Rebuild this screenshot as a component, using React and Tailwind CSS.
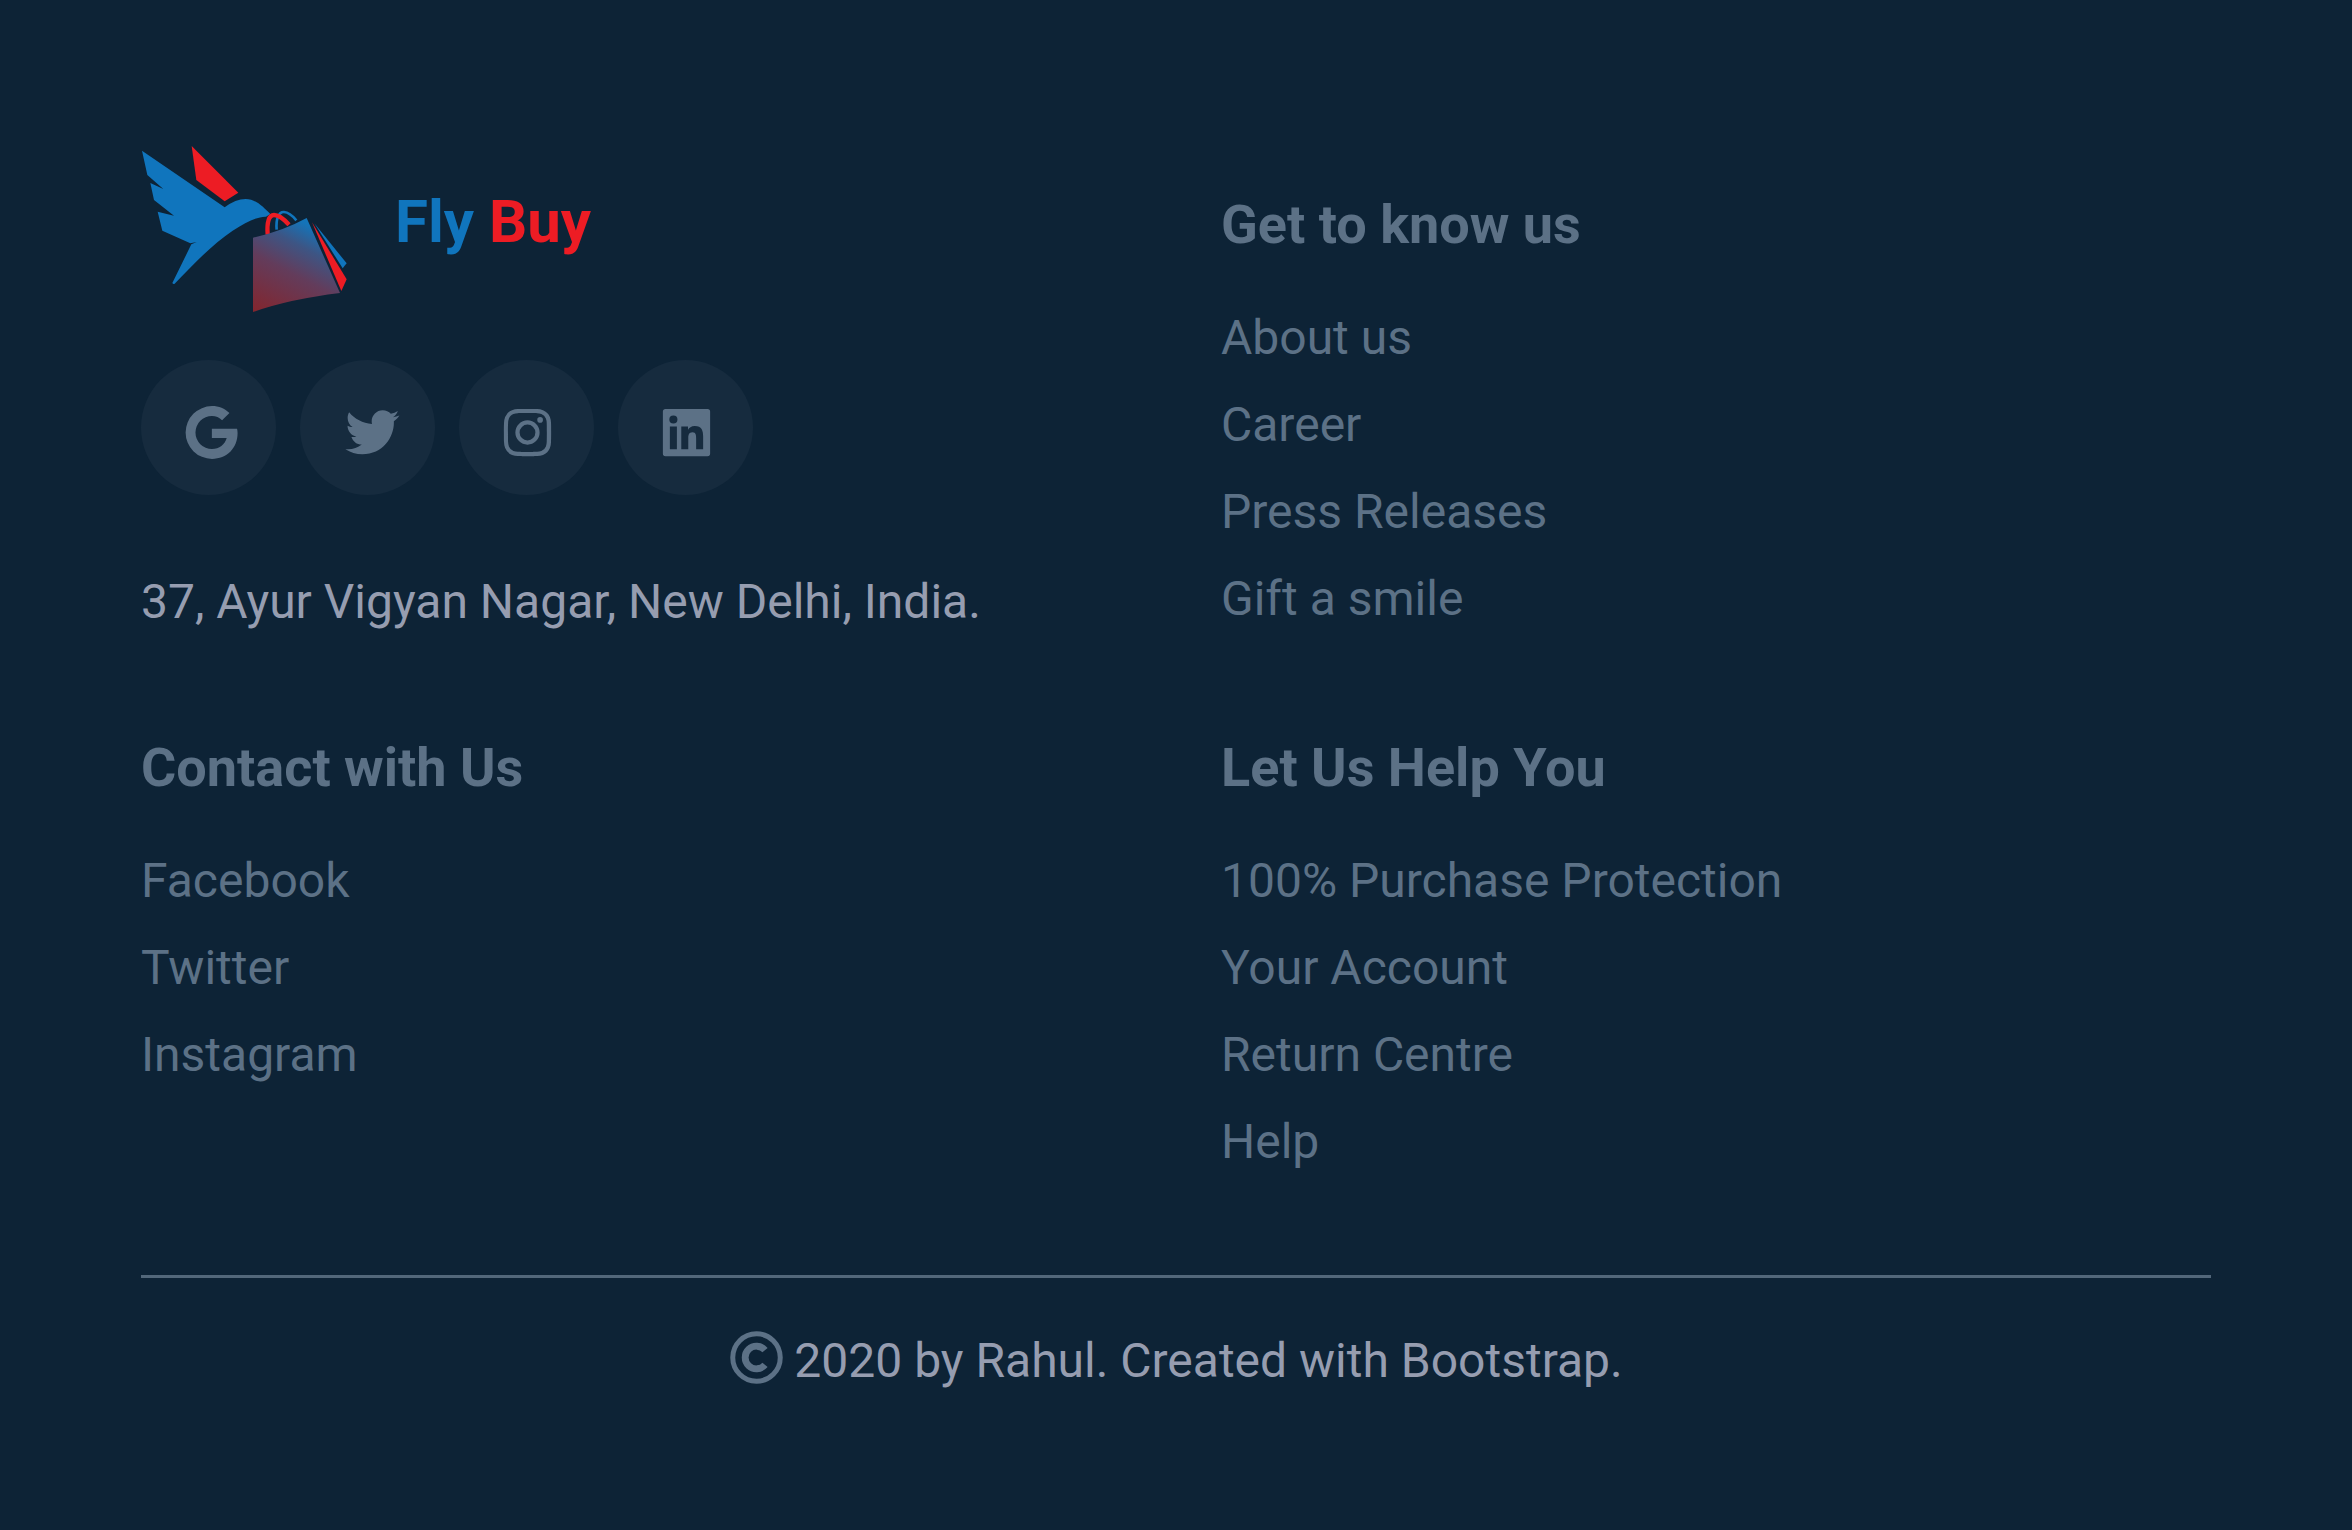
import React from "react";
import { BiLogoInstagram, BiLogoLinkedinSquare } from "react-icons/bi";

function BirdLogo() {
  return (
    <svg viewBox="33 27 621 504" className="h-[168px] w-[207px] shrink-0" aria-hidden="true">
      <defs>
        <linearGradient id="bag" gradientUnits="userSpaceOnUse" x1="380" y1="530" x2="520" y2="262">
          <stop offset="0" stopColor="#82262f" />
          <stop offset="0.5" stopColor="#633c5b" />
          <stop offset="0.78" stopColor="#3d5584" />
          <stop offset="1" stopColor="#1474b9" />
        </linearGradient>
      </defs>
      <path
        fill="#1075bd"
        d="M36 47 L284 217 Q317 192 347 192 C378 192 400 217 421 237 L408 245 C385 244 350 259 308 287 C250 325 190 388 134 446 Q130 449 127 444 L184 328 L200 321 L181 325 L97 287 L83 230 L132 242 L72 195 L61 144 L100 162 L52 120 Z"
      />
      <path fill="#ed1c24" d="M185 33 L325 173 L284 199 L199 135 Z" />
      <path fill="none" stroke="#1075bd" strokeWidth="8" d="M440 284 C437 250 447 230 462 231 C478 232 490 245 499 256" />
      <path fill="none" stroke="#ed1c24" strokeWidth="13" d="M413 299 C410 262 417 240 432 240 C450 240 465 256 477 269" />
      <path fill="url(#bag)" d="M369 308 Q457 289 530 249 L630 474 Q480 492 369 531 Z" />
      <path fill="#1075bd" d="M553 265 L650 385 L638 400 Z" />
      <path fill="#ed1c24" d="M546 262 L650 433 L634 468 Z" />
    </svg>
  );
}

function GoogleIcon({ className }) {
  return (
    <svg viewBox="0 0 24 24" fill="currentColor" className={className} aria-hidden="true">
      <path d="M22.5 10.6H12.9V14.1H18.55C17.9 16.6 15.7 18.3 12.95 18.3A6.3 6.3 0 0 1 12.95 5.7C14.4 5.7 15.8 6.3 16.8 7.3L19.6 4.6C17.8 2.9 15.6 1.95 12.95 1.95A10.05 10.05 0 0 0 12.95 22.05C18.6 22.05 22.7 18 22.7 12.2C22.7 11.6 22.6 11.1 22.5 10.6Z" />
    </svg>
  );
}

function TwitterIcon({ className }) {
  return (
    <svg viewBox="-1.7 0.4 24.4 24.4" fill="currentColor" className={className} aria-hidden="true">
      <path d="M22.46 6C21.69 6.35 20.86 6.58 20 6.69C20.88 6.16 21.56 5.32 21.88 4.31C21.05 4.81 20.13 5.16 19.16 5.36C18.37 4.5 17.26 4 16 4C13.65 4 11.73 5.92 11.73 8.29C11.73 8.63 11.77 8.96 11.84 9.27C8.28 9.09 5.11 7.38 3 4.79C2.63 5.42 2.42 6.16 2.42 6.94C2.42 8.43 3.17 9.75 4.33 10.5C3.62 10.5 2.96 10.3 2.38 10V10.03C2.38 12.11 3.86 13.85 5.82 14.24C5.46 14.34 5.08 14.39 4.69 14.39C4.42 14.39 4.15 14.36 3.89 14.31C4.43 16 6 17.26 7.89 17.29C6.43 18.45 4.58 19.13 2.56 19.13C2.22 19.13 1.88 19.11 1.54 19.07C3.44 20.29 5.7 21 8.12 21C16 21 20.33 14.46 20.33 8.79C20.33 8.6 20.33 8.42 20.32 8.23C21.16 7.63 21.88 6.87 22.46 6Z" />
    </svg>
  );
}

function CopyrightIcon({ className }) {
  return (
    <svg viewBox="0 0 24 24" fill="none" stroke="currentColor" className={className} aria-label="Copyright" role="img">
      <circle cx="12" cy="12" r="9.05" strokeWidth="1.9" />
      <path d="M15.25 9.2A4.3 4.3 0 1 0 15.25 14.8" strokeWidth="2.6" />
    </svg>
  );
}

const socials = [
  { label: "Google", Icon: GoogleIcon },
  { label: "Twitter", Icon: TwitterIcon },
  { label: "Instagram", Icon: BiLogoInstagram },
  { label: "LinkedIn", Icon: BiLogoLinkedinSquare },
];

function LinkGroup({ title, links, className = "" }) {
  return (
    <nav aria-label={title} className={className}>
      <h2 className="mb-11 text-[54px] leading-[66px] font-bold">{title}</h2>
      <ul className="flex flex-col gap-[15px]">
        {links.map((link) => (
          <li key={link}>
            <a href="#">{link}</a>
          </li>
        ))}
      </ul>
    </nav>
  );
}

export default function App() {
  return (
    <footer className="min-h-screen bg-[#0d2336] px-[141px] pt-36 pb-32 font-[Roboto,sans-serif] text-[48px] leading-[72px] text-[#5c7186]">
      <div className="grid grid-cols-2 gap-x-[90px] gap-y-[97px]">
        <div>
          <a href="#" className="flex items-start gap-[47px]">
            <BirdLogo />
            <span className="mt-[33px] text-[60px] leading-[90px] font-bold text-[#1075bd]">
              Fly <span className="text-[#ed1c24]">Buy</span>
            </span>
          </a>
          <ul className="mt-12 flex gap-6">
            {socials.map(({ label, Icon }) => (
              <li key={label}>
                <a
                  href="#"
                  aria-label={label}
                  className="flex size-[135px] items-center justify-center rounded-full bg-[#162b3e] pt-[10px] pl-[2px]"
                >
                  <Icon className="size-[63px]" />
                </a>
              </li>
            ))}
          </ul>
          <p className="mt-[71px] text-[#969db0]">37, Ayur Vigyan Nagar, New Delhi, India.</p>
        </div>
        <LinkGroup
          className="pt-12"
          title="Get to know us"
          links={["About us", "Career", "Press Releases", "Gift a smile"]}
        />
        <LinkGroup title="Contact with Us" links={["Facebook", "Twitter", "Instagram"]} />
        <LinkGroup
          title="Let Us Help You"
          links={["100% Purchase Protection", "Your Account", "Return Centre", "Help"]}
        />
      </div>
      <hr className="mt-[97px] mb-[47px] border-t-3 border-[#52677a]" />
      <p className="flex items-center justify-center gap-1.5 pr-1 text-[#969db0]">
        <CopyrightIcon className="mb-2 size-[63px] text-[#5c7186]" />
        <span>2020 by Rahul. Created with Bootstrap.</span>
      </p>
    </footer>
  );
}
